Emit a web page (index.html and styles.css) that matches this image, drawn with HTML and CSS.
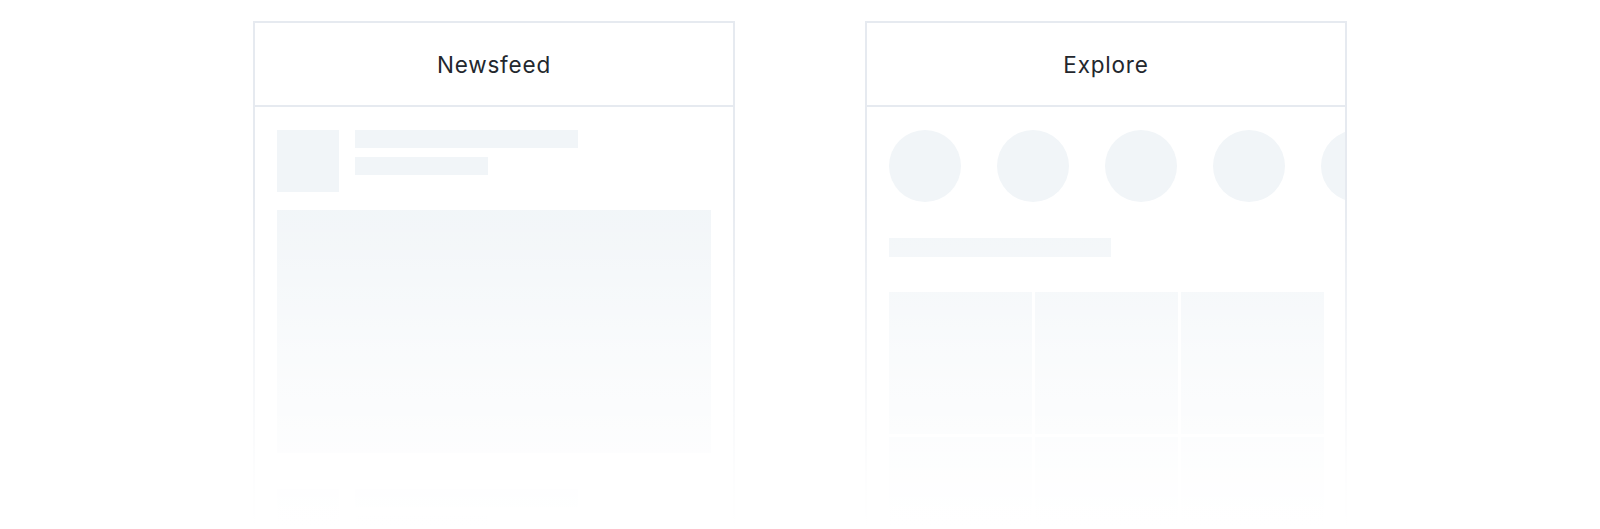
FILE: index.html
```html
<!DOCTYPE html>
<html lang="en">
<head>
<meta charset="utf-8">
<title>Skeletons</title>
<link rel="stylesheet" href="styles.css">
</head>
<body>
<main class="stage">
  <section class="card">
    <header class="card-head">Newsfeed</header>
    <div class="card-body">
      <div class="post">
        <div class="post-meta">
          <div class="sk avatar-sq"></div>
          <div class="lines">
            <div class="sk line line-long"></div>
            <div class="sk line line-short"></div>
          </div>
        </div>
        <div class="sk post-image"></div>
      </div>
      <div class="post">
        <div class="post-meta">
          <div class="sk avatar-sq"></div>
          <div class="lines">
            <div class="sk line line-long"></div>
            <div class="sk line line-short"></div>
          </div>
        </div>
        <div class="sk post-image"></div>
      </div>
    </div>
  </section>

  <section class="card">
    <header class="card-head">Explore</header>
    <div class="card-body">
      <div class="stories">
        <div class="sk circle"></div>
        <div class="sk circle"></div>
        <div class="sk circle"></div>
        <div class="sk circle"></div>
        <div class="sk circle"></div>
      </div>
      <div class="sk line line-long explore-title"></div>
      <div class="grid">
        <div class="sk tile"></div>
        <div class="sk tile"></div>
        <div class="sk tile"></div>
        <div class="sk tile"></div>
        <div class="sk tile"></div>
        <div class="sk tile"></div>
      </div>
    </div>
  </section>
  <div class="fade"></div>
</main>
</body>
</html>
```

FILE: styles.css
```css
* { box-sizing: border-box; }
html, body {
  margin: 0;
  padding: 0;
  background: #ffffff;
  height: 529px;
  overflow: hidden;
}
body {
  font-family: Inter, "Noto Sans", sans-serif;
  color: #23272d;
}
.stage {
  position: relative;
  display: flex;
  justify-content: center;
  gap: 130px;
  padding-top: 21px;
  height: 529px;
  overflow: hidden;
}
.card {
  width: 482px;
  height: 700px;
  border: 2px solid #e6eaf0;
  background: #fff;
  overflow: hidden;
  flex: none;
}
.card-head {
  height: 84px;
  border-bottom: 2px solid #e6eaf0;
  display: flex;
  align-items: center;
  justify-content: center;
  font-size: 22.5px;
  font-weight: 400;
  letter-spacing: 0.8px;
}
.card-body {
  padding: 23px 22px;
}
.sk {
  background: #f1f5f8;
}
.post {
  display: flex;
  flex-direction: column;
  gap: 18px;
  margin-bottom: 36px;
}
.post-meta {
  display: flex;
  gap: 16px;
}
.avatar-sq {
  width: 62px;
  height: 62px;
  flex: none;
}
.lines {
  display: flex;
  flex-direction: column;
  gap: 9px;
}
.line {
  height: 18px;
}
.line-long { width: 223px; }
.line-short { width: 133px; }
.post-image {
  width: 434px;
  height: 243px;
}
.stories {
  display: flex;
  gap: 36px;
  width: 520px;
}
.circle {
  width: 72px;
  height: 72px;
  border-radius: 50%;
  flex: none;
}
.explore-title {
  margin-top: 36px;
  width: 222px;
  height: 19px;
}
.grid {
  margin-top: 35px;
  display: grid;
  grid-template-columns: repeat(3, 143px);
  grid-auto-rows: 142px;
  gap: 3px;
}
.fade {
  position: absolute;
  left: 0;
  right: 0;
  top: 190px;
  bottom: 0;
  background: linear-gradient(to bottom, rgba(255,255,255,0) 0%, rgba(255,255,255,0.55) 45%, rgba(255,255,255,0.92) 85%, #ffffff 100%);
  pointer-events: none;
}
```
